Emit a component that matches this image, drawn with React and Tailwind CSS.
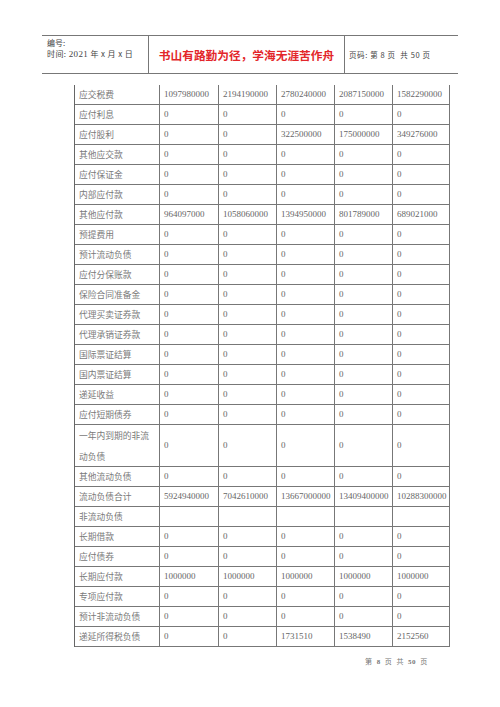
import React from 'react';

const rows = [
    ['应交税费', '1097980000', '2194190000', '2780240000', '2087150000', '1582290000'],
    ['应付利息', '0', '0', '0', '0', '0'],
    ['应付股利', '0', '0', '322500000', '175000000', '349276000'],
    ['其他应交款', '0', '0', '0', '0', '0'],
    ['应付保证金', '0', '0', '0', '0', '0'],
    ['内部应付款', '0', '0', '0', '0', '0'],
    ['其他应付款', '964097000', '1058060000', '1394950000', '801789000', '689021000'],
    ['预提费用', '0', '0', '0', '0', '0'],
    ['预计流动负债', '0', '0', '0', '0', '0'],
    ['应付分保账款', '0', '0', '0', '0', '0'],
    ['保险合同准备金', '0', '0', '0', '0', '0'],
    ['代理买卖证券款', '0', '0', '0', '0', '0'],
    ['代理承销证券款', '0', '0', '0', '0', '0'],
    ['国际票证结算', '0', '0', '0', '0', '0'],
    ['国内票证结算', '0', '0', '0', '0', '0'],
    ['递延收益', '0', '0', '0', '0', '0'],
    ['应付短期债券', '0', '0', '0', '0', '0'],
    ['一年内到期的非流动负债', '0', '0', '0', '0', '0'],
    ['其他流动负债', '0', '0', '0', '0', '0'],
    ['流动负债合计', '5924940000', '7042610000', '13667000000', '13409400000', '10288300000'],
    ['非流动负债', '', '', '', '', ''],
    ['长期借款', '0', '0', '0', '0', '0'],
    ['应付债券', '0', '0', '0', '0', '0'],
    ['长期应付款', '1000000', '1000000', '1000000', '1000000', '1000000'],
    ['专项应付款', '0', '0', '0', '0', '0'],
    ['预计非流动负债', '0', '0', '0', '0', '0'],
    ['递延所得税负债', '0', '0', '1731510', '1538490', '2152560'],
];

const widths = ['w-[59px]', 'w-[58px]', 'w-[58px]', 'w-[58px]', 'w-[57px]'];

const cjk = { fontFamily: '"Noto Sans CJK SC", sans-serif' };
const serif = { fontFamily: '"Liberation Serif", "Noto Sans CJK SC", serif' };

export default function App() {
    return (
        <div className="w-[500px] h-[707px] bg-white overflow-hidden" style={cjk}>
            {/* 页眉 */}
            <div className="mt-[35px] ml-[42px] w-[416px] h-[39px] flex border-t border-b border-[#777]">
                <div className="w-[106px] pl-[5px] pt-[1px] text-[8px] leading-[11px] text-[#444]">
                    <p>编号:</p>
                    <p className="tracking-[0.4px]">时间: <span style={serif} className="text-[9px]">2021</span> 年 x 月 x 日</p>
                </div>
                <div className="w-[196px] border-l border-[#777] flex items-center justify-center">
                    <span className="text-[11.7px] font-bold text-[#e3262a]">书山有路勤为径，学海无涯苦作舟</span>
                </div>
                <div className="flex-1 border-l border-[#777] flex items-center pl-[4px] text-[7.5px] text-[#444] tracking-[0.6px] whitespace-pre">
                    页码: 第 8 页  共 50 页
                </div>
            </div>

            {/* 表格 */}
            <div className="mt-[11px] ml-[74px] w-[376px] border-l border-[#666]">
                {rows.map((r, i) => {
                    const tall = r[0].length > 8;
                    return (
                        <div key={i} className={`flex border-b border-[#777] box-border ${tall ? 'h-[42px]' : 'h-[20px]'}`}>
                            <div className="w-[85px] border-r border-[#777] px-[4px] flex items-center text-[8.75px] leading-[21px] text-[#7a7a7a]">
                                {r[0]}
                            </div>
                            {r.slice(1).map((v, j) => (
                                <div key={j} style={serif} className={`${widths[j]} border-r border-[#777] pl-[4px] flex items-center text-[9px] text-[#666] whitespace-nowrap overflow-hidden`}>
                                    {v}
                                </div>
                            ))}
                        </div>
                    );
                })}
            </div>

            {/* 页脚 */}
            <div className="mt-[9px] ml-[365px] text-[7px] text-[#777] tracking-[0.5px] whitespace-pre">
                第  <span style={serif} className="font-bold">8</span>  页  共  <span style={serif} className="font-bold">50</span>  页
            </div>
        </div>
    );
}
